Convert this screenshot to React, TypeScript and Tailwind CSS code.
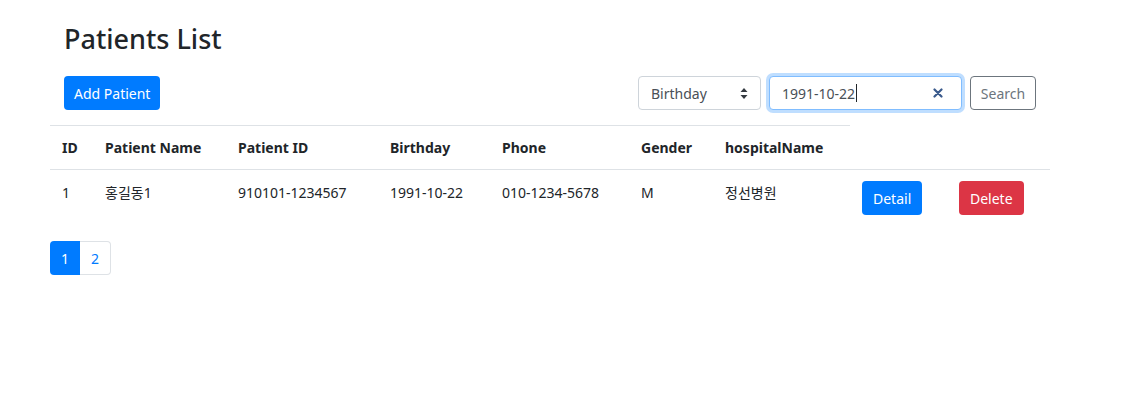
import React, { useState } from "react";

type Patient = {
  id: number;
  name: string;
  patientId: string;
  birthday: string;
  phone: string;
  gender: string;
  hospitalName: string;
};

const patients: Patient[] = [
  {
    id: 1,
    name: "홍길동1",
    patientId: "910101-1234567",
    birthday: "1991-10-22",
    phone: "010-1234-5678",
    gender: "M",
    hospitalName: "정선병원",
  },
];

const headers = [
  { label: "ID", w: "w-[43px]" },
  { label: "Patient Name", w: "w-[133px]" },
  { label: "Patient ID", w: "w-[152px]" },
  { label: "Birthday", w: "w-[112px]" },
  { label: "Phone", w: "w-[139px]" },
  { label: "Gender", w: "w-[84px]" },
  { label: "hospitalName", w: "w-[137px]" },
];

function SearchBar() {
  const [query, setQuery] = useState("1991-10-22");

  return (
    <div className="flex items-center gap-2">
      <div className="flex h-[34px] w-[123px] items-center justify-between rounded border border-[#ced4da] bg-white pl-3 pr-3 text-[14px] text-[#495057]">
        <span>Birthday</span>
        <svg width="8" height="11" viewBox="0 0 8 11" fill="#343a40">
          <path d="M4 0 L7.5 4 H0.5 Z" />
          <path d="M4 11 L7.5 7 H0.5 Z" />
        </svg>
      </div>
      <div className="flex h-[34px] w-[193px] items-center justify-between rounded border border-[#80bdff] bg-white pl-3 pr-[15px] text-[14px] text-[#495057] shadow-[0_0_0_3px_rgba(0,123,255,0.25)]">
        <span className="flex items-center">
          {query}
          <span className="ml-px inline-block h-[18px] w-px bg-[#212529]" />
        </span>
        <button
          className="flex h-4 w-4 items-center justify-center"
          onClick={() => setQuery("")}
          aria-label="Clear"
        >
          <svg width="10" height="10" viewBox="0 0 10 10">
            <path
              d="M1.5 1.5 L8.5 8.5 M8.5 1.5 L1.5 8.5"
              stroke="#3a5a8c"
              strokeWidth="2.2"
              strokeLinecap="round"
            />
          </svg>
        </button>
      </div>
      <button className="h-[34px] w-[66px] rounded border border-[#6c757d] bg-white text-[14px] text-[#6c757d]">
        Search
      </button>
    </div>
  );
}

export default function App() {
  return (
    <div className="min-h-[412px] w-[1136px] bg-white font-['Noto_Sans','Noto_Sans_CJK_KR',sans-serif] text-[14px] text-[#212529]">
      <div className="pl-[50px] pt-[23px]">
        <h2 className="pl-[14px] text-[27px] font-medium leading-[1.2] text-[#212529]">
          Patients List
        </h2>

        <div className="mt-[21px] flex w-[986px] items-center justify-between pl-[14px]">
          <button className="h-[34px] rounded bg-[#007bff] px-[10px] text-[14px] text-white">
            Add Patient
          </button>
          <SearchBar />
        </div>

        <table className="mt-[15px] w-[999px] table-fixed border-collapse">
          <thead>
            <tr>
              {headers.map((h) => (
                <th
                  key={h.label}
                  className={`${h.w} border-t border-[#dee2e6] px-3 py-[11px] text-left align-middle text-[14px] font-bold leading-[21px]`}
                >
                  {h.label}
                </th>
              ))}
              <th className="w-[97px]" />
              <th className="w-[103px]" />
            </tr>
          </thead>
          <tbody>
            {patients.map((p) => (
              <tr key={p.id} className="border-t border-[#dee2e6]">
                <td className="px-3 pt-3 align-top leading-[21px]">{p.id}</td>
                <td className="px-3 pt-3 align-top leading-[21px]">{p.name}</td>
                <td className="px-3 pt-3 align-top leading-[21px]">{p.patientId}</td>
                <td className="px-3 pt-3 align-top leading-[21px]">{p.birthday}</td>
                <td className="px-3 pt-3 align-top leading-[21px]">{p.phone}</td>
                <td className="px-3 pt-3 align-top leading-[21px]">{p.gender}</td>
                <td className="px-3 pt-3 align-top leading-[21px]">{p.hospitalName}</td>
                <td className="px-3 pt-[11px] pb-3 align-top">
                  <button className="h-[34px] rounded bg-[#007bff] px-[11px] text-[14px] text-white">
                    Detail
                  </button>
                </td>
                <td className="px-3 pt-[11px] pb-3 align-top">
                  <button className="h-[34px] rounded bg-[#dc3545] px-[11px] text-[14px] text-white">
                    Delete
                  </button>
                </td>
              </tr>
            ))}
          </tbody>
        </table>

        <div className="mt-[14px] flex text-[14px]">
          <span className="flex h-[34px] w-[30px] items-center justify-center rounded-l bg-[#007bff] text-white">
            1
          </span>
          <span className="flex h-[34px] w-[31px] items-center justify-center rounded-r border border-l-0 border-[#dee2e6] text-[#007bff]">
            2
          </span>
        </div>
      </div>
    </div>
  );
}
